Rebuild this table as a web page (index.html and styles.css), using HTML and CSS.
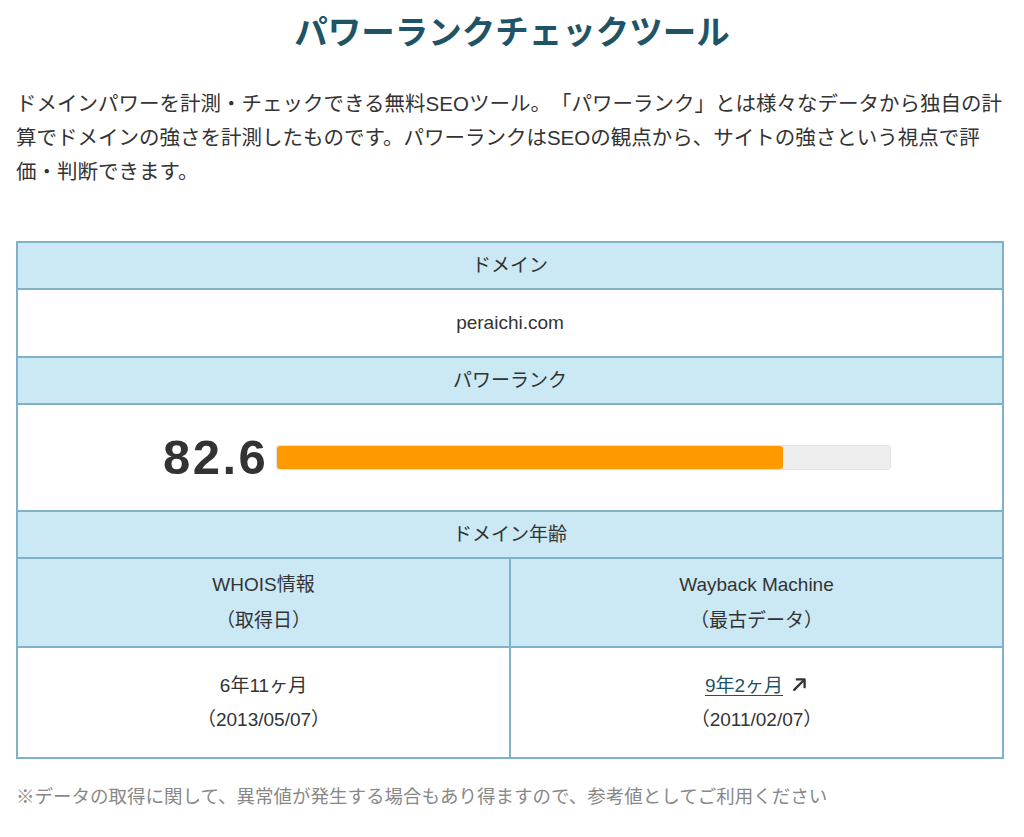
FILE: index.html
```html
<!DOCTYPE html>
<html lang="ja">
<head>
<meta charset="utf-8">
<title>パワーランクチェックツール</title>
<link rel="stylesheet" href="styles.css">
</head>
<body>
<main class="page">
  <h1 class="title">パワーランクチェックツール</h1>
  <p class="lead">ドメインパワーを計測・チェックできる無料SEOツール。「パワーランク」とは様々なデータから独自の計算でドメインの強さを計測したものです。パワーランクはSEOの観点から、サイトの強さという視点で評価・判断できます。</p>

  <table class="rank-table">
    <colgroup><col class="half"><col class="half"></colgroup>
    <tbody>
      <tr><th colspan="2" class="head">ドメイン</th></tr>
      <tr><td colspan="2" class="domain">peraichi.com</td></tr>
      <tr><th colspan="2" class="head">パワーランク</th></tr>
      <tr>
        <td colspan="2" class="score-cell">
          <div class="score">
            <span class="score-num">82.6</span>
            <div class="bar"><div class="bar-fill" style="width:82.6%"></div></div>
          </div>
        </td>
      </tr>
      <tr><th colspan="2" class="head">ドメイン年齢</th></tr>
      <tr>
        <th class="head two">WHOIS情報<br>（取得日）</th>
        <th class="head two">Wayback Machine<br>（最古データ）</th>
      </tr>
      <tr>
        <td class="age">6年11ヶ月<br>（2013/05/07）</td>
        <td class="age"><a class="age-link" href="#">9年2ヶ月</a><svg class="ext" width="17" height="17" viewBox="0 0 16 16" aria-hidden="true"><path d="M3 13 L12 4" stroke="#333" stroke-width="2.2" stroke-linecap="round" fill="none"/><path d="M5.5 3.2 H12.8 V10.5" stroke="#333" stroke-width="2.2" stroke-linecap="round" stroke-linejoin="round" fill="none"/></svg><br>（2011/02/07）</td>
      </tr>
    </tbody>
  </table>

  <p class="note">※データの取得に関して、異常値が発生する場合もあり得ますので、参考値としてご利用ください</p>
</main>
</body>
</html>
```

FILE: styles.css
```css
html, body {
  margin: 0;
  padding: 0;
  background: #ffffff;
}

body {
  font-family: "Liberation Sans", "Noto Sans CJK JP", sans-serif;
  color: #333333;
  text-spacing-trim: space-all;
}

.page {
  padding: 0 16px;
}

.title {
  margin: 5px 0 0;
  text-align: center;
  font-size: 33.5px;
  line-height: 50px;
  font-weight: 700;
  color: #1f5466;
  font-family: "Noto Sans CJK JP", sans-serif;
}

.lead {
  margin: 32px 0 0;
  font-size: 20.5px;
  line-height: 34px;
  color: #333333;
}

.rank-table {
  margin-top: 52px;
  width: 988px;
  border-collapse: collapse;
  table-layout: fixed;
  font-size: 19px;
  color: #333333;
}

.half {
  width: 50%;
}

.rank-table th,
.rank-table td {
  border: 2px solid #7fb2c9;
  text-align: center;
  padding: 0;
}

.head {
  background: #cbe9f4;
  font-weight: 400;
  height: 45px;
  line-height: 26px;
}

.head.two {
  height: 87px;
  line-height: 36px;
}

.domain {
  height: 66px;
  line-height: 26px;
}

.score-cell {
  height: 105px;
}

.score {
  display: flex;
  align-items: center;
  justify-content: center;
  gap: 10px;
  padding-left: 34px;
}

.score-num {
  font-size: 49px;
  font-weight: 700;
  letter-spacing: 2.5px;
  color: #333333;
  line-height: 1;
  width: 103px;
}

.bar {
  width: 615px;
  height: 25px;
  background: #eeeeee;
  border: 1px solid #e4e4e4;
  box-sizing: border-box;
  border-radius: 3px;
  overflow: hidden;
}

.bar-fill {
  height: 100%;
  background: #ff9900;
  border-radius: 3px;
}

.age {
  height: 109px;
  line-height: 34px;
}

.age-link {
  color: #1f5466;
  font-weight: 400;
  text-decoration: underline;
  text-underline-offset: 3px;
}

.ext {
  margin-left: 8px;
  vertical-align: -1px;
}

.note {
  margin: 23px 0 0;
  font-size: 18.5px;
  line-height: 30px;
  color: #888888;
}
```
